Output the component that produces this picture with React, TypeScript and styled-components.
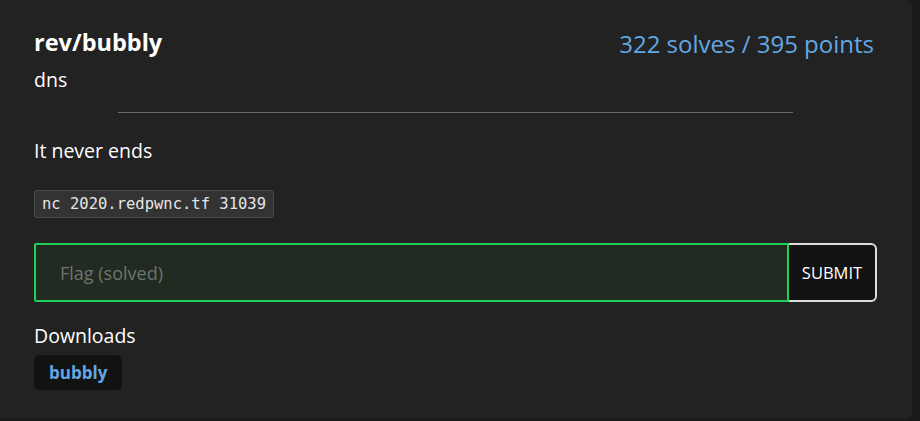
import React from "react";
import styled, { createGlobalStyle } from "styled-components";

const Global = createGlobalStyle`
  html, body { margin: 0; padding: 0; background: #1a1a1a; }
  body { font-family: "Open Sans", "Noto Sans", sans-serif; color: #fff; }
`;

const Card = styled.div`
  box-sizing: border-box;
  width: 912px;
  height: 418px;
  background: #222222;
  border-radius: 0 6px 6px 0;
  padding: 26px 35px 0 34px;
`;

const Header = styled.div`
  display: flex;
  justify-content: space-between;
  align-items: flex-start;
`;

const Title = styled.div`
  font-size: 23.5px;
  font-weight: 700;
  line-height: 32px;
`;

const Stats = styled.div`
  font-size: 24px;
  font-weight: 500;
  color: #62a8e5;
  line-height: 32px;
  padding: 2px 3px 0 0;
`;

const Author = styled.div`
  font-size: 19.5px;
  line-height: 26px;
  margin-top: 7px;
`;

const Rule = styled.hr`
  width: 80%;
  border: 0;
  border-top: 1px solid #6a6a6a;
  margin: 19px auto 0;
`;

const Description = styled.p`
  font-size: 19.5px;
  line-height: 26px;
  margin: 25px 0 0;
`;

const Code = styled.code`
  display: inline-block;
  margin-top: 26px;
  font-family: "DejaVu Sans Mono", "Liberation Mono", monospace;
  font-size: 15.5px;
  line-height: 20px;
  padding: 3px 7px 3px 7px;
  background: #333333;
  border: 1px solid #4a4a4a;
  border-radius: 3px;
  color: #e6e6e6;
`;

const Form = styled.div`
  display: flex;
  margin-top: 25px;
  height: 59px;
`;

const FlagInput = styled.input`
  flex: 1;
  box-sizing: border-box;
  height: 100%;
  background: #212b21;
  border: 2px solid #1fd155;
  border-radius: 2px 0 0 2px;
  padding: 0 24px;
  font-family: inherit;
  font-size: 18px;
  color: #fff;
  outline: none;
  &::placeholder { color: #6e746e; }
`;

const Submit = styled.button`
  box-sizing: border-box;
  width: 88px;
  height: 100%;
  background: #121212;
  color: #fff;
  border: 2px solid #dcdcdc;
  border-left: 0;
  border-radius: 0 6px 6px 0;
  font-family: inherit;
  font-size: 16.5px;
  padding: 0;
`;

const SectionLabel = styled.div`
  font-size: 19.5px;
  line-height: 26px;
  margin-top: 21px;
`;

const FileChip = styled.a`
  display: inline-block;
  margin-top: 6px;
  background: #121212;
  border-radius: 5px;
  padding: 5px 15px 5px;
  font-size: 17px;
  font-weight: 700;
  line-height: 25px;
  color: #62a8e5;
  text-decoration: none;
`;

export default function App() {
  return (
    <>
      <Global />
      <Card>
        <Header>
          <Title>rev/bubbly</Title>
          <Stats>322 solves / 395 points</Stats>
        </Header>
        <Author>dns</Author>
        <Rule />
        <Description>It never ends</Description>
        <Code>nc 2020.redpwnc.tf 31039</Code>
        <Form>
          <FlagInput placeholder="Flag (solved)" />
          <Submit>SUBMIT</Submit>
        </Form>
        <SectionLabel>Downloads</SectionLabel>
        <FileChip href="#">bubbly</FileChip>
      </Card>
    </>
  );
}
